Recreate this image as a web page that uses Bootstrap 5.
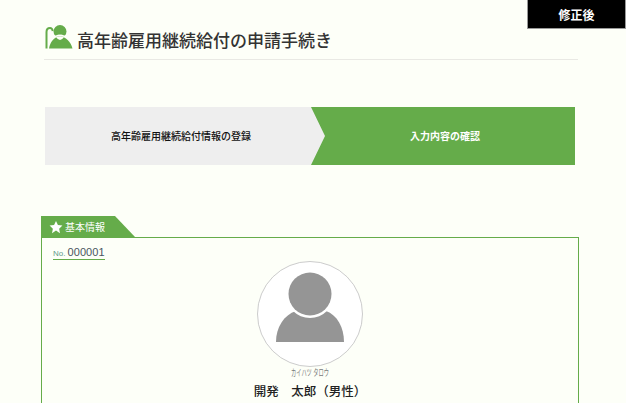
<!DOCTYPE html>
<html lang="ja">
<head>
<meta charset="utf-8">
<title>高年齢雇用継続給付の申請手続き</title>
<link href="https://cdn.jsdelivr.net/npm/bootstrap@5.3.0/dist/css/bootstrap.min.css" rel="stylesheet">
<style>
html,body{height:403px;overflow:hidden}
body{background:#fdfff8;color:#333;font-family:"Liberation Sans","Noto Sans CJK JP",sans-serif;font-size:13px}
.fix-badge{width:99px;height:29px;background:#000;color:#fff;border-left:1px solid #999;border-bottom:1px solid #999;border-right:1px solid #999;font-size:12px;font-weight:700;margin-left:527px;padding-top:3px}
.page-head{margin:-4px 48px 0 44px;height:35px;border-bottom:1px solid #e9e9e4}
.page-head h1{font-size:17px;font-weight:500;color:#333;margin:5px 0 0;line-height:24px}
.head-icon{width:28px;height:24px;margin:0 4px 0 1px;flex:none}
.steps{margin:47px 51px 0 45px;height:58px}
.step-one{width:280px;background:#eee;color:#111;font-size:10px;font-weight:500;padding-right:8px;margin-right:-14px}
.step-two{flex:1;background:#65ac4a;color:#fff;font-size:10px;font-weight:700;padding-left:4px;clip-path:polygon(0 0,100% 0,100% 100%,0 100%,14px 50%)}
.tab-mark{margin:51px 0 0 41px;width:94px;height:21px;background:#65ac4a;color:#fff;font-size:10px;padding:1px 0 0 8px;clip-path:polygon(0 0,74px 0,100% 100%,0 100%)}
.tab-mark svg{width:14px;height:14px;margin-right:2px}
.info-box{margin:0 47px 0 41px;height:166px;border:1px solid #65ac4a;border-bottom:0;padding:9px 11px 0}
.rec-no{width:fit-content;border-bottom:1px solid #65ac4a;color:#4a5560;font-size:11px;line-height:11px;letter-spacing:.05px}
.rec-no span{color:#5f9a8a;font-size:8px;margin-right:2px}
.face{width:106px;height:106px;border:1px solid #ccc;border-radius:50%;background:#fff;margin:1px auto 0}
.kana{font-size:9px;color:#777;line-height:10px;margin-top:1px;transform:scaleX(.58)}
.full-name{font-size:12.5px;font-weight:500;color:#222;line-height:20px;margin-top:4px}
</style>
</head>
<body>
<div class="fix-badge d-flex align-items-center justify-content-center">修正後</div>
<div class="page-head d-flex align-items-start">
  <svg class="head-icon" viewBox="0 0 28 24">
    <path d="M1.500 23.500V7C1.500 4 3 3 5 3 6.500 3 7.500 4.500 7.800 6" fill="none" stroke="#65ac4a" stroke-width="2"/>
    <circle cx="15" cy="6.500" r="6.500" fill="#65ac4a"/>
    <path d="M4 23.500C5 17 9 12 15 11 21 12 26 17 27.500 23.500Z" fill="#65ac4a"/>
    <path d="M7 10C10 13.500 12 9.500 15 10.500 18 9.500 20 13.500 23 10" fill="none" stroke="#fdfff8" stroke-width="1.700"/>
    <path d="M11 12Q15 10.500 19 12 15 18 11 12Z" fill="#fdfff8"/>
  </svg>
  <h1>高年齢雇用継続給付の申請手続き</h1>
</div>
<div class="steps d-flex">
  <div class="step-one d-flex align-items-center justify-content-center">高年齢雇用継続給付情報の登録</div>
  <div class="step-two d-flex align-items-center justify-content-center">入力内容の確認</div>
</div>
<div class="tab-mark d-flex align-items-center">
  <svg viewBox="0 0 24 24"><path fill="#fff" d="M12 1.500l3.300 7 7.700 1-5.600 5.300 1.400 7.700L12 18l-6.800 4.500 1.400-7.700L1 9.500l7.700-1z"/></svg>基本情報
</div>
<div class="info-box">
  <div class="rec-no"><span>No.</span>000001</div>
  <div class="face d-flex align-items-center justify-content-center">
    <svg width="104" height="104" viewBox="0 0 104 104">
      <path d="M18 80C18 65 26 53 38 49H68C79 53 86 65 86 80Z" fill="#959595"/>
      <circle cx="52" cy="32" r="24" fill="#fff"/>
      <circle cx="52" cy="32" r="21.500" fill="#959595"/>
    </svg>
  </div>
  <div class="kana text-center">カイハツ タロウ</div>
  <div class="full-name text-center">開発　太郎（男性）</div>
</div>
<script src="https://cdn.jsdelivr.net/npm/bootstrap@5.3.0/dist/js/bootstrap.bundle.min.js"></script>
</body>
</html>
